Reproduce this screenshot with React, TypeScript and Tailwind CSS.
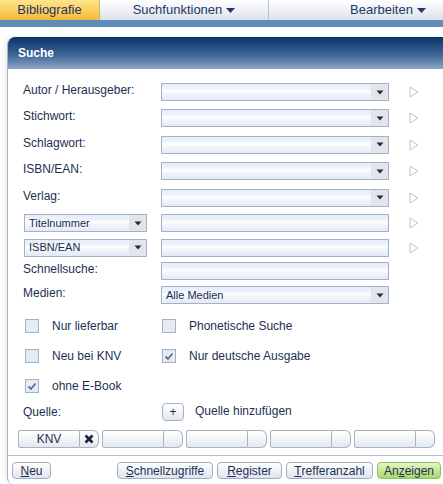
import React from 'react';

const field =
  'bg-[linear-gradient(to_bottom,#e6edf8_0%,#eef3fb_30%,#ffffff_45%,#f1f5fb_60%,#e3eaf6_100%)] border border-[#a3b3c7]';

const Caret = () => (
  <svg width="8" height="5" viewBox="0 0 8 5" className="block">
    <path d="M0.5 0.5 L7.5 0.5 L4 4.5 Z" fill="#2b2b2b" />
  </svg>
);

const Go = ({ show = true }: { show?: boolean }) => (
  <div className="w-[40px] pl-[20px] flex">
    {show && (
      <svg width="10" height="12" viewBox="0 0 10 12">
        <path d="M1 1 L9 6 L1 11 Z" fill="none" stroke="#b7c4d6" strokeWidth="1" />
      </svg>
    )}
  </div>
);

const Combo = ({ text, w = 'w-[228px]' }: { text?: string; w?: string }) => (
  <div className={`${w} h-[18px] ${field} flex items-center`}>
    <div className="flex-1 pl-[4px] text-[11px] text-[#1b2b48] leading-none">{text}</div>
    <div className="w-[17px] h-full bg-[#e2e6ec] flex items-center justify-center">
      <Caret />
    </div>
  </div>
);

const Input = () => <div className={`w-[228px] h-[18px] ${field}`} />;

const Row = ({ h, label, children, go = true }: { h: string; label: React.ReactNode; children: React.ReactNode; go?: boolean }) => (
  <div className={`${h} flex items-center`}>
    <div className="w-[138px] shrink-0">{label}</div>
    {children}
    <Go show={go} />
  </div>
);

const Label = ({ children }: { children: React.ReactNode }) => (
  <div className="pb-[4px] text-[12px] text-[#1d2f52]">{children}</div>
);

const Check = ({ checked, label }: { checked?: boolean; label: string }) => (
  <div className="flex items-center">
    <div className="w-[14px] h-[14px] border border-[#a3b3c7] bg-[#e5ebf4] flex items-center justify-center">
      {checked && (
        <svg width="10" height="9" viewBox="0 0 10 9">
          <path d="M1.5 4.5 L4 7 L8.5 1.5" fill="none" stroke="#5f6f86" strokeWidth="1.8" />
        </svg>
      )}
    </div>
    <span className="ml-[13px] text-[12px] text-[#1d2f52]">{label}</span>
  </div>
);

const Btn = ({ children, green, w }: { children: React.ReactNode; green?: boolean; w: string }) => (
  <div
    className={`${w} h-[17px] rounded-[4px] border flex items-center justify-center text-[12px] text-[#1d2f52] ${
      green
        ? 'border-[#8fbf6a] bg-[linear-gradient(to_bottom,#e3f5c6,#a6da6a)]'
        : 'border-[#9fadc0] bg-[linear-gradient(to_bottom,#ffffff,#dfe5ee)]'
    }`}
  >
    {children}
  </div>
);

const segBg = 'bg-[linear-gradient(to_bottom,#ffffff,#e3e8f0)] border border-[#a6b3c5]';

const Seg = ({ text, x }: { text?: string; x?: boolean }) => (
  <div className="flex h-[18px]">
    <div className={`w-[62px] ${segBg} rounded-l-[2px] flex items-center justify-center text-[12px] text-[#1d2f52]`}>{text}</div>
    <div className={`w-[19px] ${segBg} border-l-0 rounded-r-[6px] flex items-center justify-center`}>
      {x && (
        <svg width="10" height="10" viewBox="0 0 10 10">
          <path d="M1.5 1.5 L8.5 8.5 M8.5 1.5 L1.5 8.5" stroke="#14243f" strokeWidth="2.6" />
        </svg>
      )}
    </div>
  </div>
);

export default function App() {
  return (
    <div className="w-[443px] h-[484px] overflow-hidden bg-white flex flex-col" style={{ fontFamily: '"Liberation Sans", Arial, sans-serif' }}>
      {/* top menu */}
      <div className="h-[20px] flex bg-[linear-gradient(to_bottom,#ffffff,#dde2e8)] text-[13px] text-[#22386a]">
        <div className="w-[100px] flex items-center justify-center bg-[linear-gradient(to_bottom,#fee68a,#f6b935)] border-r border-[#c9b27a]">
          Bibliografie
        </div>
        <div className="w-[169px] flex items-center justify-center gap-[4px] border-r border-[#b7c2cf]">
          Suchfunktionen
          <svg width="9" height="5" viewBox="0 0 9 5"><path d="M0 0 L9 0 L4.5 5 Z" fill="#22386a" /></svg>
        </div>
        <div className="flex-1 flex items-center pl-[81px] gap-[4px]">
          Bearbeiten
          <svg width="9" height="5" viewBox="0 0 9 5"><path d="M0 0 L9 0 L4.5 5 Z" fill="#22386a" /></svg>
        </div>
      </div>
      <div className="h-[7px] bg-[#5f8cb8]" />
      <div className="h-[10px]" />

      {/* panel */}
      <div className="ml-[7px] flex-1 flex flex-col rounded-tl-[8px] rounded-bl-[6px] border-l border-[#aab3bf] shadow-[-2px_0_4px_rgba(0,0,0,0.08)] overflow-hidden">
        <div className="h-[32px] shrink-0 bg-[linear-gradient(to_bottom,#0a3366,#3c6495_55%,#8ea7c7)] flex items-center pl-[10px] text-[12px] font-bold text-white">
          Suche
        </div>

        <div className="h-[386px] shrink-0 pl-[15px] pt-[10px] flex flex-col">
          <Row h="h-[26px]" label={<Label>Autor / Herausgeber:</Label>}><Combo /></Row>
          <Row h="h-[26px]" label={<Label>Stichwort:</Label>}><Combo /></Row>
          <Row h="h-[27px]" label={<Label>Schlagwort:</Label>}><Combo /></Row>
          <Row h="h-[26px]" label={<Label>ISBN/EAN:</Label>}><Combo /></Row>
          <Row h="h-[27px]" label={<Label>Verlag:</Label>}><Combo /></Row>
          <Row h="h-[24px]" label={<div className="ml-[1px]"><Combo text="Titelnummer" w="w-[123px]" /></div>}><Input /></Row>
          <Row h="h-[25px]" label={<div className="ml-[1px]"><Combo text="ISBN/EAN" w="w-[123px]" /></div>}><Input /></Row>
          <Row h="h-[22px]" go={false} label={<Label>Schnellsuche:</Label>}><Input /></Row>
          <Row h="h-[26px]" go={false} label={<Label>Medien:</Label>}><Combo text="Alle Medien" /></Row>

          <div className="mt-[3px] pl-[2px] grid grid-cols-[137px_1fr] grid-rows-[30px_30px_30px] items-center">
            <Check label="Nur lieferbar" />
            <Check label="Phonetische Suche" />
            <Check label="Neu bei KNV" />
            <Check checked label="Nur deutsche Ausgabe" />
            <Check checked label="ohne E-Book" />
          </div>

          <div className="h-[22px] flex items-center">
            <div className="w-[139px] text-[12px] text-[#1d2f52]">Quelle:</div>
            <div className="w-[22px] h-[18px] rounded-[4px] border border-[#a6b3c5] bg-[linear-gradient(to_bottom,#ffffff,#e1e7ef)] flex items-center justify-center text-[12px] text-[#1d2f52] leading-none">
              +
            </div>
            <span className="ml-[11px] pb-[2px] text-[12px] text-[#1d2f52]">Quelle hinzufügen</span>
          </div>

          <div className="mt-[7px] -ml-[5px] flex gap-[3px]">
            <Seg text="KNV" x />
            <Seg />
            <Seg />
            <Seg />
            <Seg />
          </div>
        </div>

        <div className="flex-1 border-t border-[#b5bdc8] flex items-start pt-[6px] pl-[4px]">
          <Btn w="w-[39px]"><span className="underline">N</span>eu</Btn>
          <div className="w-[66px]" />
          <Btn w="w-[96px]"><span className="underline">S</span>chnellzugriffe</Btn>
          <div className="w-[4px]" />
          <Btn w="w-[65px]"><span className="underline">R</span>egister</Btn>
          <div className="w-[4px]" />
          <Btn w="w-[87px]"><span className="underline">T</span>refferanzahl</Btn>
          <div className="w-[4px]" />
          <Btn green w="w-[64px]">An<span className="underline">z</span>eigen</Btn>
        </div>
      </div>
    </div>
  );
}
